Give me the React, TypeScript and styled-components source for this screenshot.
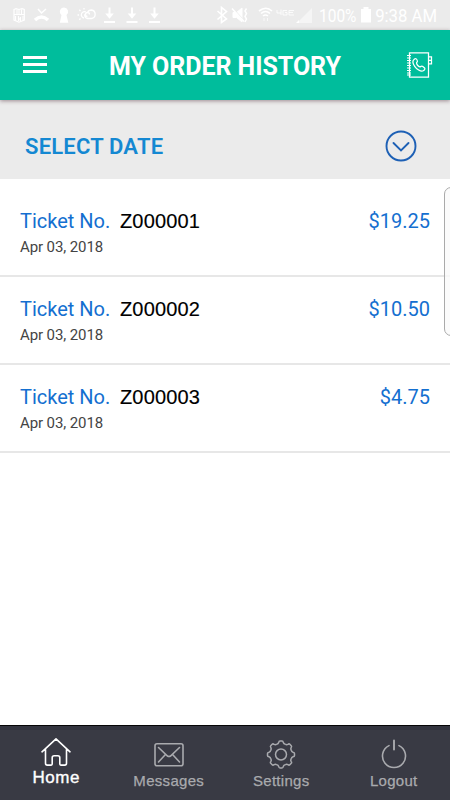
import React from 'react';
import styled, { createGlobalStyle } from 'styled-components';

const GlobalStyle = createGlobalStyle`
  * { box-sizing: border-box; }
  html, body { margin: 0; padding: 0; background: #fff; }
  body { font-family: Roboto, sans-serif; overflow: hidden; }
  svg { display: block; flex: none; overflow: visible; }
`;

const Screen = styled.div`
  position: relative;
  display: flex;
  flex-direction: column;
  width: 450px;
  height: 800px;
  overflow: hidden;
  background: #fff;
`;

const StatusBar = styled.div`
  display: flex;
  flex: none;
  justify-content: space-between;
  height: 30px;
  background: #ebebeb;
  color: #fff;
`;

const StatusReadout = styled.div`
  display: flex;
  align-items: center;
  height: 30px;
  padding-right: 13px;
`;

const StatusText = styled.span<{ $width: number; $scale: number }>`
  width: ${p => p.$width}px;
  font-size: 18px;
  line-height: 30px;
  padding-top: 1px;
  white-space: nowrap;
  transform: scaleX(${p => p.$scale});
  transform-origin: left center;
`;

const Header = styled.header`
  position: relative;
  z-index: 1;
  display: flex;
  flex: none;
  align-items: center;
  height: 70px;
  padding: 0 18px 0 23px;
  background: #00bd9c;
  box-shadow: 0 1px 4px rgba(60, 20, 35, 0.45);
`;

const MenuButton = styled.button`
  display: flex;
  flex-direction: column;
  gap: 4px;
  width: 24px;
  margin-bottom: 1px;
  padding: 0;
  border: 0;
  background: none;
`;

const MenuLine = styled.span`
  height: 3px;
  background: #fff;
`;

const Title = styled.h1`
  flex: 1;
  margin: 4px 0 0 62px;
  color: #fff;
  font-size: 25px;
  font-weight: 700;
  line-height: 30px;
  letter-spacing: -0.05px;
  white-space: nowrap;
`;

const DateBar = styled.div`
  display: flex;
  flex: none;
  align-items: center;
  justify-content: space-between;
  height: 79px;
  padding: 12px 33px 0 25px;
  background: #ebebeb;
`;

const DateLabel = styled.span`
  color: #1488d2;
  font-size: 22px;
  font-weight: 600;
  line-height: 30px;
  letter-spacing: 0.2px;
  padding-top: 3px;
`;

const OrderList = styled.ul`
  flex: 1;
  margin: 0;
  padding: 10px 0 0;
  list-style: none;
`;

const OrderRow = styled.li`
  display: flex;
  justify-content: space-between;
  height: 88px;
  padding: 19px 20px 0;
  border-bottom: 2px solid #e7e7e7;
`;

const TicketLine = styled.div`
  display: flex;
  height: 26px;
  line-height: 26px;
`;

const TicketLabel = styled.span`
  width: 100px;
  color: #146fd0;
  font-size: 20px;
`;

const TicketNumber = styled.span`
  color: #000;
  font-family: 'Liberation Sans', sans-serif;
  font-size: 20px;
  letter-spacing: 0.15px;
  -webkit-text-stroke: 0.15px #000;
`;

const OrderDate = styled.div`
  color: #444;
  font-size: 15px;
  line-height: 26px;
  letter-spacing: -0.1px;
`;

const Price = styled.span`
  color: #146fd0;
  font-size: 20px;
  line-height: 26px;
`;

const EdgeHandle = styled.div`
  position: absolute;
  top: 187px;
  right: -10px;
  width: 16px;
  height: 149px;
  border: 1px solid #aaa;
  border-radius: 7px;
  background: rgba(250, 250, 250, 0.8);
`;

const TabBar = styled.nav`
  display: grid;
  flex: none;
  grid-template-columns: repeat(4, 112.5px);
  height: 75px;
  border-top: 1px solid #050506;
  background: linear-gradient(#33343f 0 4px, #393a44 4px);
`;

const Tab = styled.div`
  display: flex;
  flex-direction: column;
  align-items: center;
  padding-top: 11px;
`;

const TabLabel = styled.span<{ $active?: boolean }>`
  color: ${p => (p.$active ? '#fff' : '#a9aaae')};
  font-family: 'Liberation Sans', sans-serif;
  font-size: ${p => (p.$active ? 17 : 15)}px;
  line-height: 20px;
  margin-top: ${p => (p.$active ? 0 : 3)}px;
  letter-spacing: ${p => (p.$active ? 0.6 : 0.3)}px;
  -webkit-text-stroke: ${p => (p.$active ? 0.35 : 0.25)}px currentColor;
`;

const StatusIcons = () => (
  <svg width="180" height="30" viewBox="0 0 180 30" fill="none" stroke="#fff" strokeWidth="1.2">
    <path d="M14 9.5l2-.8 3 .8 3-.8 2.3.8v10.5l-5.3 2.2-5-2.2z" />
    <path d="M14 14.5h10.5M17 9.500v4.500M19 9v5M21.500 9.500v4.500M15.500 16v4M18.500 16v5l2-4v4M23 16v4" strokeWidth="1" />
    <path d="M35 20q6.500-6 13 0" strokeWidth="3.500" />
    <path d="M38 9l3.500 4L46 9" strokeWidth="1.500" />
    <path d="M64 7.500a4.200 4.200 0 0 1 2.500 7.500l1.800 7.700h-8.500l1.700-7.700A4.200 4.200 0 0 1 64 7.500z" fill="#fff" stroke="none" />
    <path d="M84 18a3.200 3.200 0 1 1 2-6M84 9.500V8M80.500 11l-1.200-1.200M79 15h-1.500M80.500 18.500l-1.200 1.200" strokeWidth="1.300" />
    <path d="M89.500 14.500a2 2 0 1 0-2 2M87.500 18.500h4a4.300 4.300 0 0 0 0-8.500q-3 0-4 2.500M87.500 18.500a3.200 3.200 0 0 1-2.500-4.500" strokeWidth="1.300" />
    {[109.500, 132, 154.500].map(x => (
      <g key={x} transform={`translate(${x} 0)`}>
        <path d="M0 7.500V14M-5.500 22h11" strokeWidth="2" />
        <path d="M-4.300 13.500h8.600L0 18.700z" fill="#fff" stroke="none" />
      </g>
    ))}
  </svg>
);

const SignalIcons = () => (
  <svg width="103" height="30" viewBox="0 0 103 30" fill="none" stroke="#fff">
    <path d="M1.500 11l9 8-5 3.500v-15l5 4-9 8" strokeWidth="1.600" />
    <path d="M17 12.500h3.500L26 8v14l-5.500-4.500H17z" fill="#fff" />
    <path d="M17 8.500l11 12.500" stroke="#ebebeb" strokeWidth="1.500" />
    <path d="M16 8.500l12 13M30.500 8.500l-1.500 2.500 1.500 2.500-1.500 3 1.500 2.500-1.500 3" strokeWidth="1.500" />
    <path d="M43 11q7-5.500 13 0M45 13.500q4.500-4 9 0M47 16q2.500-2 5 0" strokeWidth="1.600" />
    <path d="M48 18v3M51.500 18v3" opacity=".7" />
    <path d="M61 10v3h4M65 9.500V15M71 10.500h-4V15h4v-2.500h-2M78 10.500h-5V15h5M73 12.500h4" opacity=".8" />
    <path d="M96 8v15H81z" fill="#fff" opacity=".5" stroke="none" />
    <path d="M83 20v3h-3z" fill="#fff" stroke="none" />
  </svg>
);

const BatteryIcon = () => (
  <svg width="10" height="30" viewBox="0 0 10 30" fill="#fff">
    <path d="M2.500 7h5v2H10v13.500H0V9h2.500z" />
  </svg>
);

const PhoneBookIcon = () => (
  <svg width="26" height="28" viewBox="0 0 26 28" fill="none" stroke="#fff" strokeWidth="1.250">
    <path d="M3.500 1.800h19V26h-19zM23 5.800h2.500v7H23M23 9.300h2.500" />
    <path d="M1 4.500h4M1 7h4M1 9.500h4M1 12h4M1 14.500h4M1 17h4M1 19.500h4M1 22h4M1 24h4" strokeWidth="1.150" />
    <path d="M8.300 8.200c1.200-.9 2.100-.5 2.800.8.800 1.300.4 2-.5 2.700-.4 1.400 1.700 4 3.400 4.200.9-.5 1.700-1.300 2.800-.4l1.800 1.500c.9 1-.4 2.600-1.900 3-2.100.6-6.100-1.900-8-4.700-1.900-2.700-2.400-5.600-.4-7.100z" />
  </svg>
);

const ChevronCircle = () => (
  <svg width="32" height="32" viewBox="0 0 32 32" fill="none" stroke="#1d60b5" strokeWidth="1.900">
    <circle cx="16" cy="16" r="14.500" />
    <path d="M8.500 13l7.500 7.500 7.500-7.500" strokeLinecap="round" />
  </svg>
);

const HomeIcon = () => (
  <svg width="32" height="31" viewBox="0 0 32 31" fill="none" stroke="#fff" strokeWidth="1.600" strokeLinejoin="round" strokeLinecap="round">
    <path d="M2 14.800L16 1.800l14 13M5.500 12v14.300q0 1.800 1.800 1.800h3.900q1 0 1-1v-6.300q0-2 2-2h3.600q2 0 2 2v6.300q0 1 1 1h3.900q1.800 0 1.800-1.800V12" />
  </svg>
);

const MailIcon = () => (
  <svg width="32" height="31" viewBox="0 0 32 31" fill="none" stroke="#a9aaae" strokeWidth="1.600" strokeLinecap="round">
    <rect x="2" y="6.700" width="28" height="22" rx="2" />
    <path d="M5.500 10.500l9 8.500q1.500 1 3 0L26.500 10.500M5.500 25l6.500-7M26.500 25L20 18" />
  </svg>
);

const GearIcon = () => (
  <svg width="32" height="31" viewBox="0 0 32 31" fill="none" stroke="#a9aaae" strokeWidth="1.500" strokeLinejoin="round">
    {[0, 45, 90, 135, 180, 225, 270, 315].map(angle => (
      <path
        key={angle}
        transform={`rotate(${angle} 16 17.5)`}
        d="M11.700 7.200Q13.300 7 13.700 5.500Q13.900 4 15 4H17Q18.100 4 18.300 5.500Q18.700 7 20.300 7.200"
      />
    ))}
    <circle cx="16" cy="17.500" r="5.500" />
  </svg>
);

const PowerIcon = () => (
  <svg width="32" height="31" viewBox="0 0 32 31" fill="none" stroke="#a9aaae" strokeWidth="1.600" strokeLinecap="round">
    <path d="M11 8.600a11.500 11.500 0 1 0 10 0" />
    <path d="M16 3.500v9" strokeWidth="1.900" />
  </svg>
);

const orders = [
  { id: 'Z000001', date: 'Apr 03, 2018', price: '$19.25' },
  { id: 'Z000002', date: 'Apr 03, 2018', price: '$10.50' },
  { id: 'Z000003', date: 'Apr 03, 2018', price: '$4.75' },
];

const tabs = [
  { label: 'Home', Icon: HomeIcon, active: true },
  { label: 'Messages', Icon: MailIcon },
  { label: 'Settings', Icon: GearIcon },
  { label: 'Logout', Icon: PowerIcon },
];

export default function App() {
  return (
    <Screen>
      <GlobalStyle />
      <StatusBar>
        <StatusIcons />
        <StatusReadout>
          <SignalIcons />
          <StatusText $width={42} $scale={0.86}>100%</StatusText>
          <BatteryIcon />
          <StatusText $width={66} $scale={0.93}>&nbsp;9:38 AM</StatusText>
        </StatusReadout>
      </StatusBar>
      <Header>
        <MenuButton aria-label="Menu">
          <MenuLine />
          <MenuLine />
          <MenuLine />
        </MenuButton>
        <Title>MY ORDER HISTORY</Title>
        <PhoneBookIcon />
      </Header>
      <DateBar>
        <DateLabel>SELECT DATE</DateLabel>
        <ChevronCircle />
      </DateBar>
      <OrderList>
        {orders.map(order => (
          <OrderRow key={order.id}>
            <div>
              <TicketLine>
                <TicketLabel>Ticket No.</TicketLabel>
                <TicketNumber>{order.id}</TicketNumber>
              </TicketLine>
              <OrderDate>{order.date}</OrderDate>
            </div>
            <Price>{order.price}</Price>
          </OrderRow>
        ))}
      </OrderList>
      <TabBar>
        {tabs.map(({ label, Icon, active }) => (
          <Tab key={label}>
            <Icon />
            <TabLabel $active={active}>{label}</TabLabel>
          </Tab>
        ))}
      </TabBar>
      <EdgeHandle />
    </Screen>
  );
}
